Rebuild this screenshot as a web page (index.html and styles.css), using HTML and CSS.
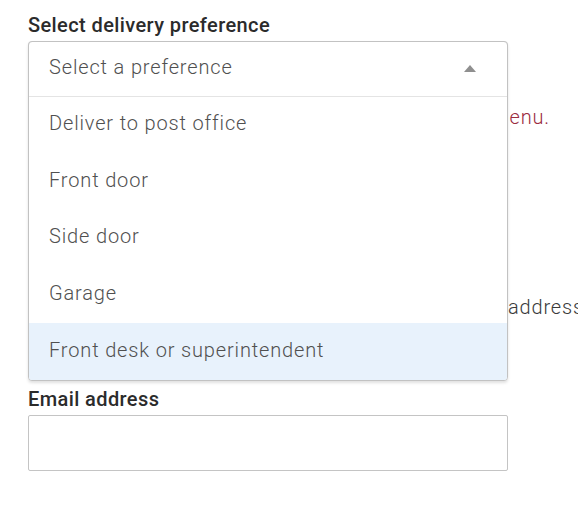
FILE: index.html
```html
<!DOCTYPE html>
<html lang="en">
<head>
<meta charset="utf-8">
<title>Delivery preference</title>
<link rel="stylesheet" href="styles.css">
</head>
<body>
<form class="form">
  <div class="field">
    <label class="label">Select delivery preference</label>
    <div class="select-wrap">
      <div class="select-closed"></div>
      <div class="menu">
        <div class="menu-head">
          <span class="placeholder">Select a preference</span>
          <span class="caret"></span>
        </div>
        <ul class="options">
          <li class="option">Deliver to post office</li>
          <li class="option">Front door</li>
          <li class="option">Side door</li>
          <li class="option">Garage</li>
          <li class="option option-active">Front desk or superintendent</li>
        </ul>
      </div>
    </div>
    <p class="error">Please choose a delivery preference from the menu.</p>
  </div>
  <p class="note">We will send tracking updates to your address</p>
  <div class="field">
    <label class="label">Email address</label>
    <div class="input"></div>
  </div>
</form>
</body>
</html>
```
FILE: styles.css
```css
html, body {
  margin: 0;
  padding: 0;
  background: #ffffff;
}
body {
  font-family: Roboto, "Liberation Sans", sans-serif;
  width: 578px;
  height: 505px;
  overflow: hidden;
}
.form {
  padding: 13px 0 0 28px;
  white-space: nowrap;
}
.field {
  display: flex;
  flex-direction: column;
}
.label {
  font-size: 20px;
  font-weight: 500;
  color: #2b2b2b;
  line-height: 24px;
  letter-spacing: 0.4px;
  margin-bottom: 4px;
}
.select-wrap {
  position: relative;
  width: 480px;
}
.select-closed {
  height: 56px;
  box-sizing: border-box;
  border: 1px solid #c4c4c4;
  border-radius: 4px;
}
.menu {
  position: absolute;
  top: 0;
  left: 0;
  width: 480px;
  box-sizing: border-box;
  background: #ffffff;
  border: 1px solid #c2c2c2;
  border-radius: 4px;
  box-shadow: 0 2px 3px rgba(0, 0, 0, 0.12);
  overflow: hidden;
  z-index: 2;
}
.menu-head {
  height: 55px;
  box-sizing: border-box;
  display: flex;
  align-items: center;
  justify-content: space-between;
  padding: 0 31px 4px 20px;
  border-bottom: 1px solid #e4e4e4;
}
.placeholder,
.option {
  font-size: 20px;
  font-weight: 300;
  color: #505050;
  letter-spacing: 0.85px;
}
.caret {
  width: 0;
  height: 0;
  border-left: 6.5px solid transparent;
  border-right: 6.5px solid transparent;
  border-bottom: 7px solid #8f8f8f;
  margin-top: 3px;
}
.options {
  list-style: none;
  margin: 0;
  padding: 0;
}
.option {
  height: 56.6px;
  box-sizing: border-box;
  display: flex;
  align-items: center;
  padding: 0 0 4px 20px;
}
.option-active {
  background: #e8f2fc;
}
.error {
  width: 522px;
  margin: 8px 0 0;
  text-align: right;
  font-size: 20px;
  font-weight: 300;
  line-height: 24px;
  color: #9b2c3f;
  letter-spacing: 0.85px;
}
.note {
  width: 556px;
  margin: 166px 0 0;
  text-align: right;
  font-size: 20px;
  font-weight: 300;
  line-height: 24px;
  color: #3a3a3a;
  letter-spacing: 0.85px;
}
.field + .note + .field {
  margin-top: 68px;
}
.input {
  width: 480px;
  height: 56px;
  box-sizing: border-box;
  border: 1px solid #c4c4c4;
  border-radius: 2px;
}
```
